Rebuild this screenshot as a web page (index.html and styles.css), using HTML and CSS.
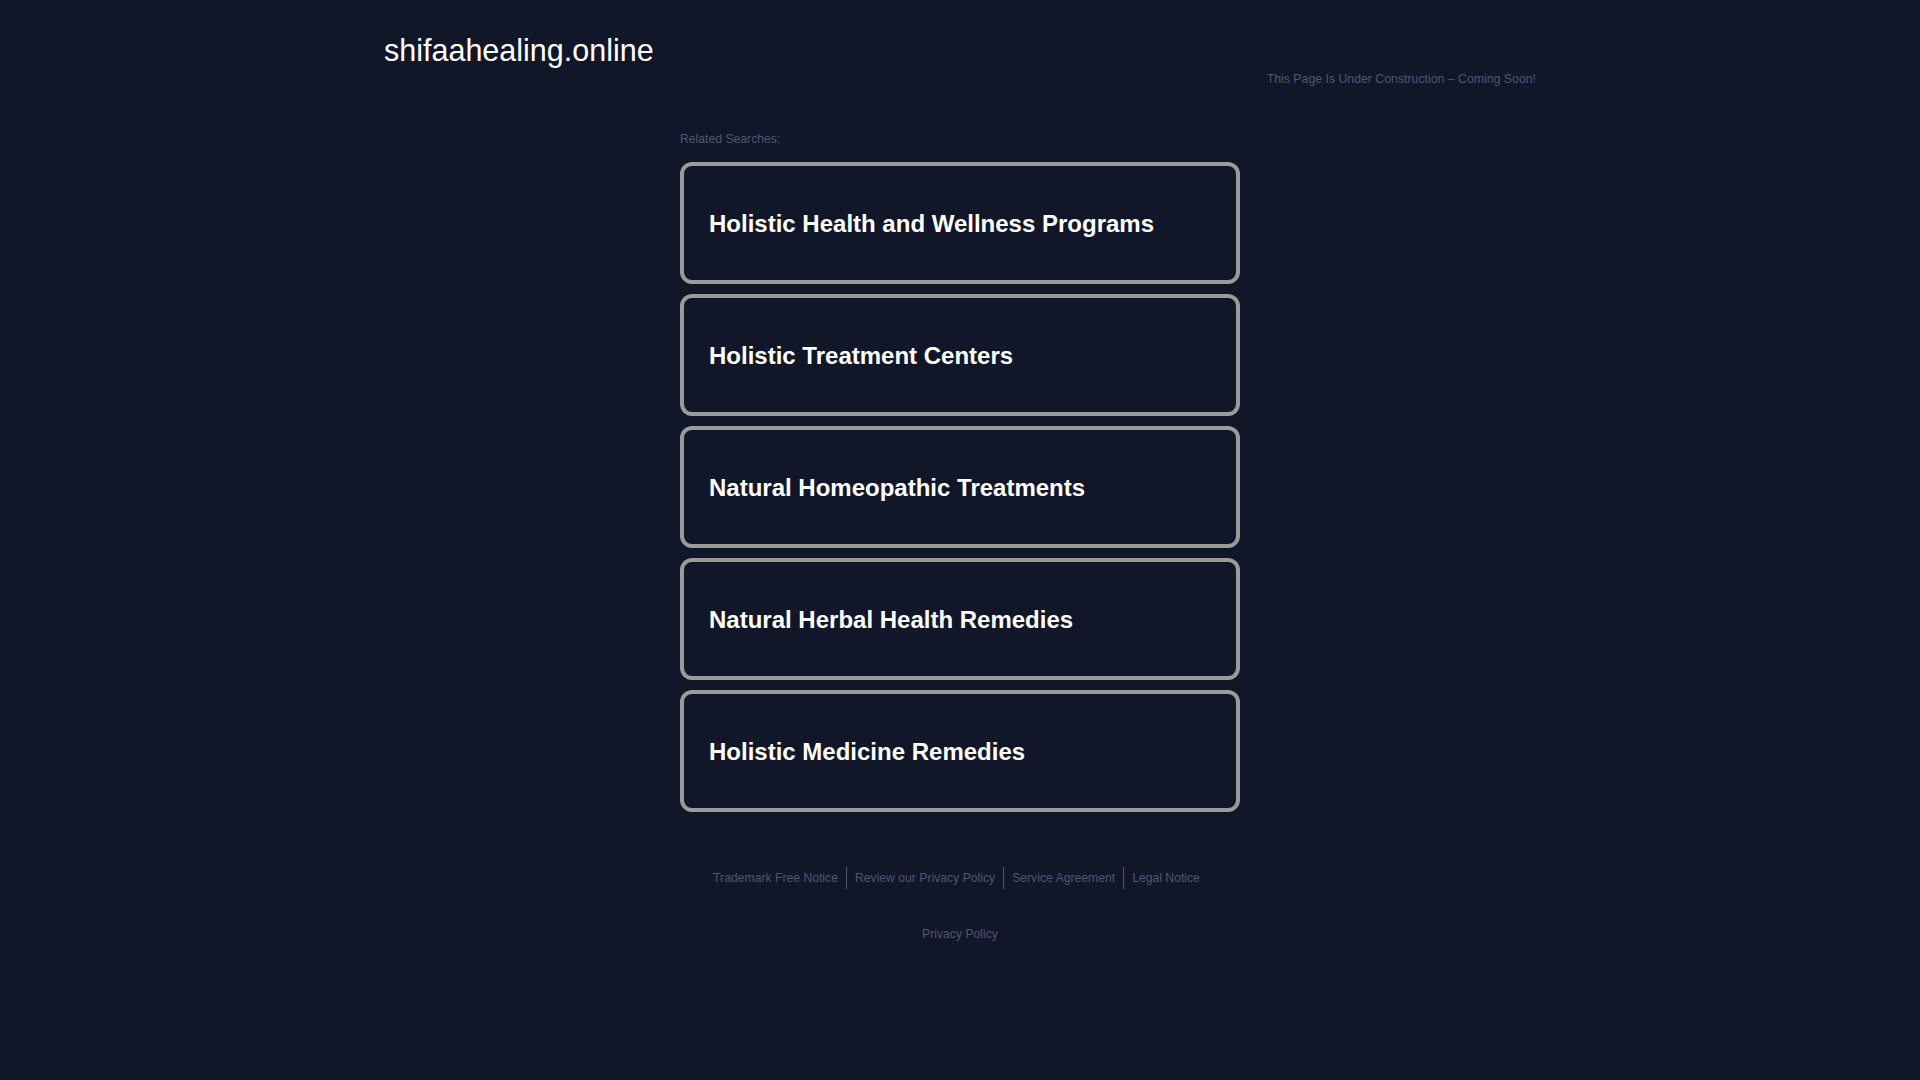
FILE: index.html
```html
<!DOCTYPE html>
<html lang="en">
<head>
<meta charset="utf-8">
<title>shifaahealing.online</title>
<link rel="stylesheet" href="styles.css">
</head>
<body>
<div class="page">
  <header class="header">
    <div class="domain">shifaahealing.online</div>
    <div class="notice">This Page Is Under Construction – Coming Soon!</div>
  </header>
  <main class="main">
    <div class="related">Related Searches:</div>
    <ul class="links">
      <li><a class="card" href="#">Holistic Health and Wellness Programs</a></li>
      <li><a class="card" href="#">Holistic Treatment Centers</a></li>
      <li><a class="card" href="#">Natural Homeopathic Treatments</a></li>
      <li><a class="card" href="#">Natural Herbal Health Remedies</a></li>
      <li><a class="card" href="#">Holistic Medicine Remedies</a></li>
    </ul>
  </main>
  <footer class="footer">
    <div class="footer-row first">
      <a class="flink" href="#">Trademark Free Notice</a>
      <a class="flink" href="#">Review our Privacy Policy</a>
      <a class="flink" href="#">Service Agreement</a>
      <a class="flink" href="#">Legal Notice</a>
    </div>
    <div class="footer-row second">
      <a class="flink" href="#">Privacy Policy</a>
    </div>
  </footer>
</div>
</body>
</html>
```
FILE: styles.css
```css
html, body {
  margin: 0;
  padding: 0;
  background: #111729;
  font-family: "Liberation Sans", Arial, sans-serif;
}
.page {
  min-height: 1080px;
}
.header {
  width: 1152px;
  margin: 0 auto;
  padding-top: 33px;
  display: flex;
  justify-content: space-between;
  align-items: flex-start;
}
.domain {
  font-size: 30.5px;
  line-height: 34px;
  color: #ffffff;
}
.notice {
  margin-top: 39px;
  font-size: 12.3px;
  line-height: 14px;
  color: #4e5672;
}
.main {
  width: 560px;
  margin: 46px auto 0;
}
.related {
  font-size: 12.2px;
  line-height: 14px;
  color: #4e5672;
  margin-bottom: 16px;
}
.links {
  list-style: none;
  margin: 0;
  padding: 0;
  display: flex;
  flex-direction: column;
  gap: 10px;
}
.card {
  box-sizing: border-box;
  height: 122px;
  display: flex;
  align-items: center;
  padding: 2px 24px 0 25px;
  border: 4px solid #9a9a9a;
  border-radius: 12px;
  color: #ffffff;
  font-size: 24px;
  font-weight: bold;
  text-decoration: none;
}
.footer {
  margin-top: 55px;
  text-align: center;
}
.footer-row {
  display: flex;
  justify-content: center;
}
.footer-row.first {
  padding-right: 7px;
}
.footer-row.second {
  margin-top: 34px;
}
.flink {
  display: block;
  font-size: 12.2px;
  line-height: 22px;
  padding: 0 8px;
  color: #4e5672;
  text-decoration: none;
}
.flink + .flink {
  border-left: 1px solid #4e5672;
}
```
